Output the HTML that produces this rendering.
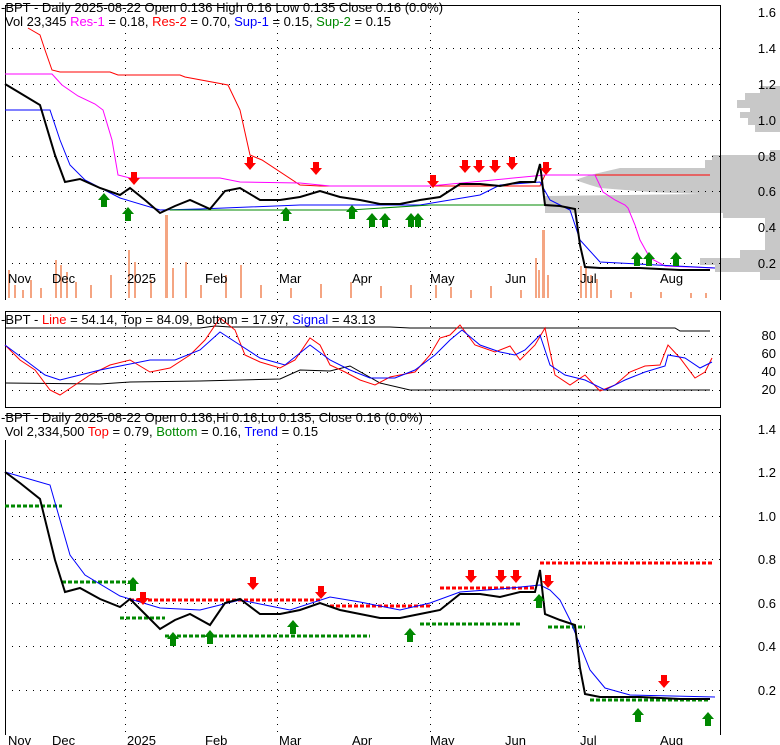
<!DOCTYPE html><html><head><style>body{margin:0;background:#fff}svg{display:block;font-family:"Liberation Sans",sans-serif}</style></head><body>
<svg width="780" height="745" viewBox="0 0 780 745" xmlns="http://www.w3.org/2000/svg">
<!-- volume profile (right anchored) -->
<polygon fill="#c8c8c8" points="780,86 760,86 760,93 745,93 745,100 737,100 737,108 750,108 750,112 740,112 740,118 748,118 748,125 755,125 755,132 780,132 780,150 770,150 770,155 712,155 712,160 705,160 705,168 620,168 590,175 575,180 590,185 600,188 650,192 700,194 545,196 545,213 723,213 723,218 765,218 765,250 740,250 740,258 700,258 700,265 715,265 715,272 760,272 760,280 780,280"/>
<g fill="none" stroke="#000">
<path d="M5.5,300 V5.5 H720.5 V300"/>
<rect x="5.5" y="311.5" width="715" height="96"/>
<path d="M5.5,735 V415.5 H720.5 V735"/>
</g>
<g stroke="#000" stroke-dasharray="1 6" stroke-width="1">
<path d="M5,48.5H720M5,84.5H720M5,120.5H720M5,156.5H720M5,191.5H720M5,227.5H720M5,263.5H720"/>
<path d="M5,336.5H720M5,354.5H720M5,372.5H720M5,390.5H720"/>
<path d="M5,429.5H720M5,472.5H720M5,516.5H720M5,559.5H720M5,603.5H720M5,646.5H720M5,690.5H720"/>
<path d="M125.5,5V300M277.5,5V300M430.5,5V300M578.5,5V300M125.5,312V407M277.5,312V407M430.5,312V407M578.5,312V407M125.5,416V735M277.5,416V735M430.5,416V735M578.5,416V735"/>
</g>
<g fill="#f4a582">
<rect x="8" y="270" width="2" height="28"/><rect x="14" y="285" width="2" height="13"/><rect x="22" y="290" width="2" height="8"/><rect x="30" y="280" width="2" height="18"/><rect x="40" y="288" width="2" height="10"/><rect x="55" y="260" width="2" height="38"/><rect x="60" y="265" width="2" height="33"/><rect x="66" y="272" width="2" height="26"/><rect x="75" y="282" width="2" height="16"/><rect x="90" y="285" width="2" height="13"/><rect x="110" y="275" width="2" height="23"/><rect x="128" y="250" width="2" height="48"/><rect x="134" y="262" width="2" height="36"/><rect x="150" y="280" width="2" height="18"/><rect x="165" y="215" width="3" height="83"/><rect x="172" y="268" width="2" height="30"/><rect x="185" y="262" width="2" height="36"/><rect x="200" y="285" width="2" height="13"/><rect x="225" y="275" width="2" height="23"/><rect x="240" y="265" width="2" height="33"/><rect x="260" y="285" width="2" height="13"/><rect x="290" y="288" width="2" height="10"/><rect x="320" y="284" width="2" height="14"/><rect x="350" y="282" width="2" height="16"/><rect x="380" y="286" width="2" height="12"/><rect x="410" y="285" width="2" height="13"/><rect x="435" y="285" width="2" height="13"/><rect x="450" y="287" width="2" height="11"/><rect x="470" y="290" width="2" height="8"/><rect x="490" y="286" width="2" height="12"/><rect x="520" y="290" width="2" height="8"/><rect x="535" y="258" width="2" height="40"/><rect x="538" y="270" width="2" height="28"/><rect x="542" y="230" width="3" height="68"/><rect x="547" y="275" width="2" height="23"/><rect x="580" y="266" width="2" height="32"/><rect x="585" y="268" width="2" height="30"/><rect x="590" y="275" width="2" height="23"/><rect x="596" y="279" width="2" height="19"/><rect x="610" y="290" width="2" height="8"/><rect x="630" y="292" width="2" height="6"/><rect x="660" y="292" width="2" height="6"/><rect x="690" y="293" width="2" height="5"/><rect x="705" y="293" width="2" height="5"/>
</g>
<polyline fill="none" stroke="#f00" points="28,28 40,35 45,50 52,70 60,72 110,72 118,75 180,75 185,77 228,85 240,110 250,155 262,160 300,185 320,186 430,186 540,186 545,175 710,175"/>
<polyline fill="none" stroke="#f0f" points="5,74 52,74 62,85 78,96 95,104 103,110 112,140 118,175 130,178 220,178 240,182 300,183 330,186 430,186 545,175 595,175 603,192 615,200 625,205 628,208 635,225 640,240 650,258 665,266 715,268"/>
<polyline fill="none" stroke="#00f" points="5,110 50,110 60,140 70,165 85,180 120,198 160,210 200,209 300,205 420,205 450,200 480,195 500,185 540,182 550,200 570,210 580,240 600,262 715,268"/>
<polyline fill="none" stroke="#080" points="170,210 350,210 430,205 545,205"/>
<polyline fill="none" stroke="#000" stroke-width="2" points="5,84 20,93 40,105 55,155 65,182 80,179 100,188 120,195 130,188 145,200 160,213 175,206 190,200 210,209 225,191 240,188 260,200 280,200 300,197 320,191 340,197 360,200 380,204 400,204 420,200 440,197 460,184 480,184 500,186 520,182 535,182 540,164 545,205 560,206 575,209 580,245 585,267 600,268 640,268 680,270 710,270"/>
<g fill="#f00"><path d="M131,172h6v6h3l-6,7l-6,-7h3z"/><path d="M247,157h6v6h3l-6,7l-6,-7h3z"/><path d="M313,162h6v6h3l-6,7l-6,-7h3z"/><path d="M430,175h6v6h3l-6,7l-6,-7h3z"/><path d="M462,160h6v6h3l-6,7l-6,-7h3z"/><path d="M476,160h6v6h3l-6,7l-6,-7h3z"/><path d="M492,160h6v6h3l-6,7l-6,-7h3z"/><path d="M509,157h6v6h3l-6,7l-6,-7h3z"/><path d="M543,162h6v6h3l-6,7l-6,-7h3z"/></g>
<g fill="#080"><path d="M104,193l6,7h-3v7h-6v-7h-3z"/><path d="M128,207l6,7h-3v7h-6v-7h-3z"/><path d="M286,207l6,7h-3v7h-6v-7h-3z"/><path d="M352,205l6,7h-3v7h-6v-7h-3z"/><path d="M372,213l6,7h-3v7h-6v-7h-3z"/><path d="M385,213l6,7h-3v7h-6v-7h-3z"/><path d="M411,213l6,7h-3v7h-6v-7h-3z"/><path d="M418,213l6,7h-3v7h-6v-7h-3z"/><path d="M637,252l6,7h-3v7h-6v-7h-3z"/><path d="M649,252l6,7h-3v7h-6v-7h-3z"/><path d="M676,252l6,7h-3v7h-6v-7h-3z"/></g>
<g font-size="13" fill="#000">
<text x="1" y="12">-BPT - Daily 2025-08-22 Open 0.136  High 0.16  Low 0.135  Close 0.16 (0.0%)</text>
<text x="5" y="26"><tspan>Vol 23,345 </tspan><tspan fill="#f0f">Res-1</tspan> = 0.18, <tspan fill="#f00">Res-2</tspan> = 0.70, <tspan fill="#00f">Sup-1</tspan> = 0.15, <tspan fill="#080">Sup-2</tspan> = 0.15</text>
</g>
<g font-size="13" fill="#000" text-anchor="end">
<text x="776" y="17">1.6</text><text x="776" y="53">1.4</text><text x="776" y="89">1.2</text><text x="776" y="125">1.0</text><text x="776" y="161">0.8</text><text x="776" y="196">0.6</text><text x="776" y="232">0.4</text><text x="776" y="268">0.2</text>
<text x="776" y="340">80</text><text x="776" y="358">60</text><text x="776" y="376">40</text><text x="776" y="394">20</text>
<text x="776" y="434">1.4</text><text x="776" y="477">1.2</text><text x="776" y="521">1.0</text><text x="776" y="564">0.8</text><text x="776" y="608">0.6</text><text x="776" y="651">0.4</text><text x="776" y="695">0.2</text>
</g>
<g font-size="13" fill="#000">
<text x="8" y="283">Nov</text><text x="52" y="283">Dec</text><text x="127" y="283">2025</text><text x="205" y="283">Feb</text><text x="279" y="283">Mar</text><text x="352" y="283">Apr</text><text x="430" y="283">May</text><text x="505" y="283">Jun</text><text x="580" y="283">Jul</text><text x="660" y="283">Aug</text>
<text x="8" y="745">Nov</text><text x="52" y="745">Dec</text><text x="127" y="745">2025</text><text x="205" y="745">Feb</text><text x="279" y="745">Mar</text><text x="352" y="745">Apr</text><text x="430" y="745">May</text><text x="505" y="745">Jun</text><text x="580" y="745">Jul</text><text x="660" y="745">Aug</text>
</g>
<polyline fill="none" stroke="#000" points="5,328 200,328 215,326 230,327 390,327 410,328 540,328 675,328 680,331 710,331"/>
<polyline fill="none" stroke="#000" points="5,383 100,384 130,382 200,381 280,379 300,370 330,371 350,366 380,383 410,390 560,390 710,390"/>
<polyline fill="none" stroke="#f00" points="5,345 20,360 35,370 50,390 60,395 75,385 90,375 110,365 130,360 150,372 170,368 190,355 205,340 220,318 235,330 245,355 260,362 280,368 295,360 310,338 320,345 330,365 345,372 360,380 375,385 390,377 400,375 415,372 430,355 440,338 450,335 460,325 475,345 495,352 510,346 520,360 535,345 545,328 555,375 570,385 585,375 600,391 615,385 630,372 645,366 660,365 668,345 680,358 695,378 705,372 712,358"/>
<polyline fill="none" stroke="#00f" points="5,345 25,360 45,375 60,380 80,375 100,370 125,365 150,360 175,360 200,350 220,332 240,345 260,358 285,365 310,345 330,360 350,370 370,378 395,378 415,370 435,355 450,340 462,330 480,345 500,352 515,355 525,350 535,340 540,335 550,365 565,375 585,380 605,390 625,380 645,372 665,366 668,355 685,358 700,368 712,362"/>
<g font-size="13"><text x="1" y="324"><tspan fill="#000">-BPT - </tspan><tspan fill="#f00">Line</tspan> = 54.14, Top = 84.09, Bottom = 17.97, <tspan fill="#00f">Signal</tspan> = 43.13</text></g>
<g stroke-dasharray="4 2" stroke-width="3" fill="none">
<path stroke="#080" d="M5,506H62M62,582H130M120,618H165M165,636H370M420,624H520M540,598H545M548,627H585M590,700H710"/>
<path stroke="#f00" d="M130,600H320M330,606H430M440,588H535M540,563H712"/>
</g>
<polyline fill="none" stroke="#00f" points="5,472 50,485 60,520 70,555 85,575 120,596 160,608 200,610 240,600 260,604 290,610 330,597 360,602 400,610 430,603 460,592 500,589 540,585 550,590 560,600 570,620 580,645 590,670 605,688 630,695 715,697"/>
<polyline fill="none" stroke="#000" stroke-width="2" points="5,472 20,483 40,499 55,560 65,592 80,588 100,599 120,607 130,599 145,614 160,629 175,620 190,614 210,625 225,603 240,599 260,614 280,614 300,610 320,603 340,610 360,614 380,618 400,618 420,614 440,610 460,594 480,594 500,597 520,592 535,592 540,570 545,614 560,620 575,625 580,668 585,694 600,697 640,697 680,699 710,699"/>
<g fill="#f00"><path d="M140,592h6v6h3l-6,7l-6,-7h3z"/><path d="M250,577h6v6h3l-6,7l-6,-7h3z"/><path d="M318,586h6v6h3l-6,7l-6,-7h3z"/><path d="M468,570h6v6h3l-6,7l-6,-7h3z"/><path d="M498,570h6v6h3l-6,7l-6,-7h3z"/><path d="M513,570h6v6h3l-6,7l-6,-7h3z"/><path d="M545,575h6v6h3l-6,7l-6,-7h3z"/><path d="M661,675h6v6h3l-6,7l-6,-7h3z"/></g>
<g fill="#080"><path d="M133,577l6,7h-3v7h-6v-7h-3z"/><path d="M173,632l6,7h-3v7h-6v-7h-3z"/><path d="M210,630l6,7h-3v7h-6v-7h-3z"/><path d="M293,620l6,7h-3v7h-6v-7h-3z"/><path d="M410,628l6,7h-3v7h-6v-7h-3z"/><path d="M539,594l6,7h-3v7h-6v-7h-3z"/><path d="M638,708l6,7h-3v7h-6v-7h-3z"/><path d="M708,712l6,7h-3v7h-6v-7h-3z"/></g>
<rect x="2" y="416" width="375" height="24" fill="#fff"/>
<g font-size="13" fill="#000">
<text x="1" y="422">-BPT - Daily 2025-08-22 Open 0.136,Hi 0.16,Lo 0.135, Close 0.16 (0.0%)</text>
<text x="5" y="436">Vol 2,334,500 <tspan fill="#f00">Top</tspan> = 0.79, <tspan fill="#080">Bottom</tspan> = 0.16, <tspan fill="#00f">Trend</tspan> = 0.15</text>
</g>
</svg>
</body></html>
